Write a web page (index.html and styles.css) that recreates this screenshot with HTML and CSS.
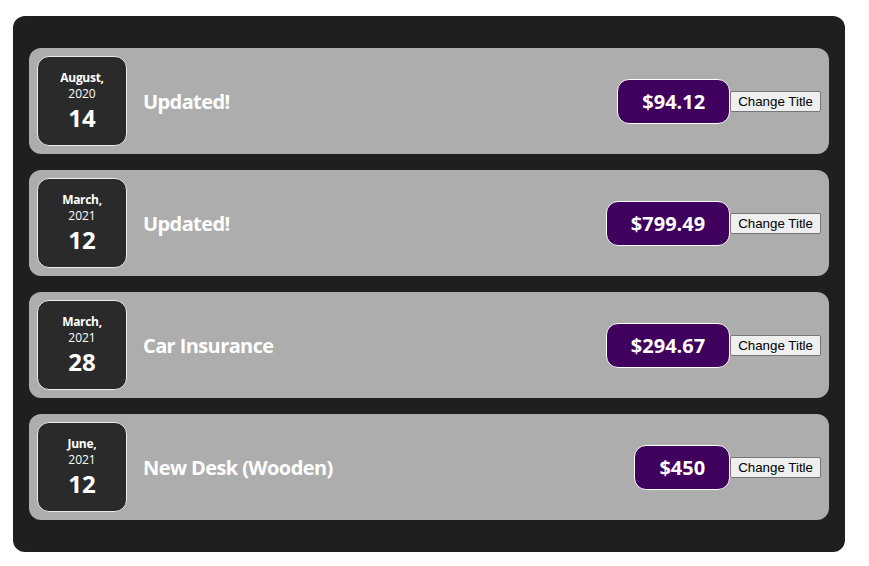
FILE: index.html
```html
<!DOCTYPE html>
<html>
<head>
<meta charset="utf-8">
<link rel="stylesheet" href="styles.css">
</head>
<body>
<div class="expenses">
  <div class="expense-item">
    <div class="expense-date">
      <div class="expense-date__month">August,</div>
      <div class="expense-date__year">2020</div>
      <div class="expense-date__day">14</div>
    </div>
    <div class="expense-item__description">
      <h2>Updated!</h2>
      <div class="expense-item__price">$94.12</div>
    </div>
    <button class="btn">Change Title</button>
  </div>
  <div class="expense-item">
    <div class="expense-date">
      <div class="expense-date__month">March,</div>
      <div class="expense-date__year">2021</div>
      <div class="expense-date__day">12</div>
    </div>
    <div class="expense-item__description">
      <h2>Updated!</h2>
      <div class="expense-item__price">$799.49</div>
    </div>
    <button class="btn">Change Title</button>
  </div>
  <div class="expense-item">
    <div class="expense-date">
      <div class="expense-date__month">March,</div>
      <div class="expense-date__year">2021</div>
      <div class="expense-date__day">28</div>
    </div>
    <div class="expense-item__description">
      <h2>Car Insurance</h2>
      <div class="expense-item__price">$294.67</div>
    </div>
    <button class="btn">Change Title</button>
  </div>
  <div class="expense-item">
    <div class="expense-date">
      <div class="expense-date__month">June,</div>
      <div class="expense-date__year">2021</div>
      <div class="expense-date__day">12</div>
    </div>
    <div class="expense-item__description">
      <h2>New Desk (Wooden)</h2>
      <div class="expense-item__price">$450</div>
    </div>
    <button class="btn">Change Title</button>
  </div>
</div>
</body>
</html>
```

FILE: styles.css
```css
* { box-sizing: border-box; }
html, body { margin: 0; padding: 0; background: #ffffff; }
body { font-family: "Open Sans", "Noto Sans", sans-serif; }

.expenses {
  width: 832px;
  margin: 16px 0 0 13px;
  padding: 16px;
  background-color: #1f1f1f;
  border-radius: 12px;
}

.expense-item {
  display: flex;
  align-items: center;
  padding: 8px;
  margin: 16px 0;
  border-radius: 12px;
  background-color: #adadad;
}

.expense-date {
  display: flex;
  flex-direction: column;
  align-items: center;
  justify-content: center;
  width: 90px;
  height: 90px;
  padding-top: 1px;
  border: 1px solid #ececec;
  background-color: #2a2a2a;
  color: #ffffff;
  border-radius: 12px;
  flex: none;
}
.expense-date__month { font-size: 12px; font-weight: bold; line-height: 16px; letter-spacing: -0.3px; }
.expense-date__year { font-size: 12px; line-height: 16px; }
.expense-date__day { font-size: 24px; font-weight: bold; line-height: 32px; }

.expense-item__description {
  display: flex;
  align-items: center;
  flex: 1;
}
.expense-item__description h2 {
  flex: 1;
  margin: 0 16px;
  font-size: 20px;
  letter-spacing: -0.6px;
  color: #ffffff;
}
.expense-item__price {
  font-size: 20px;
  font-weight: bold;
  color: #ffffff;
  background-color: #40005d;
  border: 1px solid #ffffff;
  padding: 8px 24px;
  border-radius: 12px;
  line-height: 27px;
}

.btn {
  font-family: "Liberation Sans", Arial, sans-serif;
  font-size: 13.333px;
  line-height: 15px;
  padding: 2px 7px;
  margin: 0;
  color: #000000;
  background: #efefef;
  border: 1px solid #767676;
  border-radius: 2px;
}
```
